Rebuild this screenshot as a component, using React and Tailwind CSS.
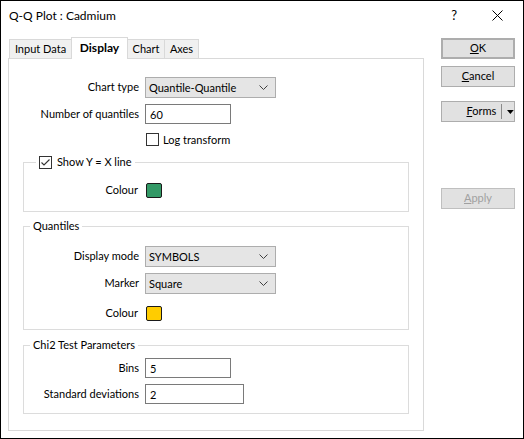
const font = { fontFamily: 'Lato, "Liberation Sans", sans-serif' }

function Chevron() {
  return (
    <svg width="9" height="5" viewBox="0 0 9 5" className="shrink-0">
      <path d="M0.5 0.5 L4.5 4.5 L8.5 0.5" fill="none" stroke="#404040" strokeWidth="1" />
    </svg>
  )
}

function Select({ value, width = 'w-[131px]' }) {
  return (
    <div className={`${width} flex h-[21px] items-center justify-between border border-[#adadad] bg-[#e5e5e5] pl-[3px] pr-[7px]`}>
      <span className="leading-none">{value}</span>
      <Chevron />
    </div>
  )
}

function TextBox({ value, width }) {
  return (
    <div className={`${width} flex h-[20px] items-center border border-[#7a7a7a] bg-white pl-[4px]`}>
      <span className="leading-none">{value}</span>
    </div>
  )
}

function CheckBox({ checked }) {
  return (
    <div className="flex h-[13px] w-[13px] shrink-0 items-center justify-center border border-[#333333] bg-white">
      {checked ? (
        <svg width="11" height="11" viewBox="0 0 11 11">
          <path d="M1.5 5.5 L4 8 L9.5 2.5" fill="none" stroke="#333333" strokeWidth="1.1" />
        </svg>
      ) : null}
    </div>
  )
}

function Swatch({ color }) {
  return <div className={`h-[15px] w-[16px] rounded-[2px] border border-[#1a1a1a] ${color}`} />
}

function Row({ label, labelWidth, children, className = '' }) {
  return (
    <div className={`flex items-center ${className}`}>
      <div className={`${labelWidth} text-right`}>{label}</div>
      {children}
    </div>
  )
}

function Button({ children, className = '' }) {
  return (
    <div className={`flex h-[21px] w-[74px] items-center justify-center border border-[#adadad] bg-[#e1e1e1] ${className}`}>
      {children}
    </div>
  )
}

export default function App() {
  return (
    <div style={font} className="flex h-[439px] w-[524px] flex-col border border-black bg-white text-[11px] text-black">
      {/* title bar */}
      <div className="flex h-[29px] items-center pl-[8px] text-[12px]">
        <span className="flex-1">Q-Q Plot : Cadmium</span>
        <span className="mr-[35px] text-[13px]">?</span>
        <svg width="11" height="11" viewBox="0 0 11 11" className="mr-[20px]">
          <path d="M0.5 0.5 L10.5 10.5 M10.5 0.5 L0.5 10.5" stroke="#000" strokeWidth="1" />
        </svg>
      </div>

      <div className="flex flex-1">
        {/* left: tabs + page */}
        <div className="ml-[7px] flex w-[416px] flex-col pt-[7px]">
          <div className="flex h-[21px] items-end pl-[1px]">
            <div className="flex h-[19px] w-[63px] items-center justify-center border border-b-0 border-[#d9d9d9] bg-[#f0f0f0]">Input Data</div>
            <div className="relative z-10 -mb-px -ml-px flex h-[22px] w-[57px] items-center justify-center border border-b-0 border-[#d9d9d9] bg-white pb-[2px] text-[12px] font-bold">Display</div>
            <div className="-ml-px flex h-[19px] w-[38px] items-center justify-center border border-b-0 border-[#d9d9d9] bg-[#f0f0f0]">Chart</div>
            <div className="-ml-px flex h-[19px] w-[35px] items-center justify-center border border-b-0 border-[#d9d9d9] bg-[#f0f0f0]">Axes</div>
          </div>

          <div className="flex h-[373px] flex-col border border-[#d9d9d9] bg-white">
            <Row label="Chart type" labelWidth="w-[130px]" className="mt-[18px] gap-[6px]">
              <Select value="Quantile-Quantile" />
            </Row>
            <Row label="Number of quantiles" labelWidth="w-[130px]" className="mt-[6px] gap-[6px]">
              <TextBox value="60" width="w-[86px]" />
            </Row>
            <div className="mt-[9px] flex items-center gap-[4px] pl-[137px]">
              <CheckBox />
              <span className="leading-[13px]">Log transform</span>
            </div>

            <fieldset className="mx-[14px] mt-[8px] h-[58px] border border-[#dcdcdc]">
              <legend className="ml-[12px] flex h-[16px] items-center gap-[5px] px-[3px]">
                <CheckBox checked />
                <span>Show Y = X line</span>
              </legend>
              <Row label="Colour" labelWidth="w-[114px]" className="mt-[12px] gap-[8px]">
                <Swatch color="bg-[#339966]" />
              </Row>
            </fieldset>

            <fieldset className="mx-[14px] mt-[6px] h-[112px] border border-[#dcdcdc]">
              <legend className="ml-[6px] h-[16px] px-[3px] leading-[16px]">Quantiles</legend>
              <Row label="Display mode" labelWidth="w-[115px]" className="mt-[12px] gap-[6px]">
                <Select value="SYMBOLS" />
              </Row>
              <Row label="Marker" labelWidth="w-[115px]" className="mt-[6px] gap-[6px]">
                <Select value="Square" />
              </Row>
              <Row label="Colour" labelWidth="w-[114px]" className="mt-[11px] gap-[8px]">
                <Swatch color="bg-[#ffcc00]" />
              </Row>
            </fieldset>

            <fieldset className="mx-[14px] mt-[7px] h-[77px] border border-[#dcdcdc]">
              <legend className="ml-[6px] h-[16px] px-[3px] leading-[16px]">Chi2 Test Parameters</legend>
              <Row label="Bins" labelWidth="w-[115px]" className="mt-[5px] gap-[6px]">
                <TextBox value="5" width="w-[86px]" />
              </Row>
              <Row label="Standard deviations" labelWidth="w-[115px]" className="mt-[6px] gap-[6px]">
                <TextBox value="2" width="w-[99px]" />
              </Row>
            </fieldset>
          </div>
        </div>

        {/* right: buttons */}
        <div className="ml-[17px] flex flex-col pt-[8px]">
          <Button className="border-2 border-[#0078d7]">
            <span><u>O</u>K</span>
          </Button>
          <Button className="mt-[7px]">
            <span><u>C</u>ancel</span>
          </Button>
          <Button className="mt-[14px] justify-start">
            <span className="ml-[11px] w-[45px] text-right"><u>F</u>orms</span>
            <div className="ml-[5px] h-[15px] w-px bg-[#8a8a8a]" />
            <svg width="7" height="4" viewBox="0 0 7 4" className="ml-[5px]">
              <path d="M0 0 L7 0 L3.5 4 Z" fill="#000" />
            </svg>
          </Button>
          <Button className="mt-[66px] border-[#bfbfbf] bg-[#cccccc] text-[#a0a0a0]">
            <span><u>A</u>pply</span>
          </Button>
        </div>
      </div>
    </div>
  )
}
